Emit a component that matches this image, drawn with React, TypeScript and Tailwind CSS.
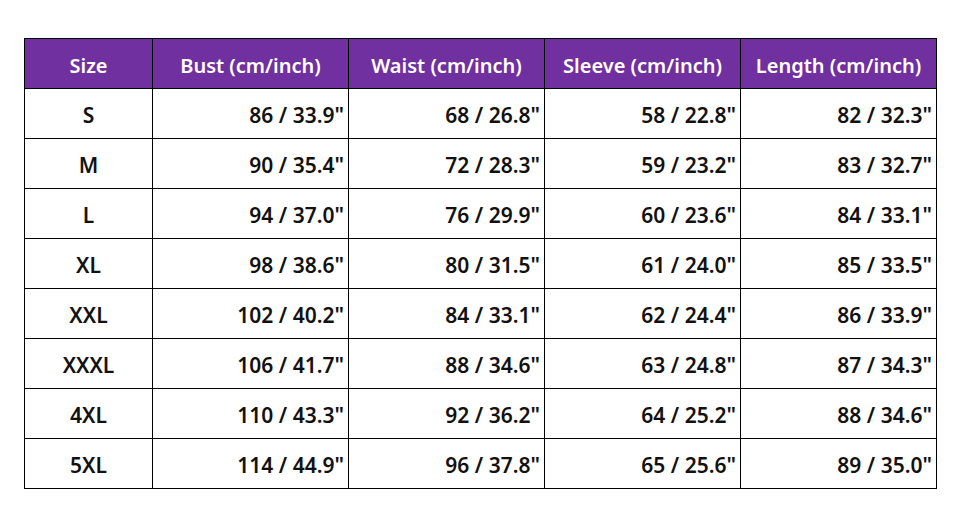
const rows = [
  ['S', '86 / 33.9"', '68 / 26.8"', '58 / 22.8"', '82 / 32.3"'],
  ['M', '90 / 35.4"', '72 / 28.3"', '59 / 23.2"', '83 / 32.7"'],
  ['L', '94 / 37.0"', '76 / 29.9"', '60 / 23.6"', '84 / 33.1"'],
  ['XL', '98 / 38.6"', '80 / 31.5"', '61 / 24.0"', '85 / 33.5"'],
  ['XXL', '102 / 40.2"', '84 / 33.1"', '62 / 24.4"', '86 / 33.9"'],
  ['XXXL', '106 / 41.7"', '88 / 34.6"', '63 / 24.8"', '87 / 34.3"'],
  ['4XL', '110 / 43.3"', '92 / 36.2"', '64 / 25.2"', '88 / 34.6"'],
  ['5XL', '114 / 44.9"', '96 / 37.8"', '65 / 25.6"', '89 / 35.0"'],
]

const headers = ['Size', 'Bust (cm/inch)', 'Waist (cm/inch)', 'Sleeve (cm/inch)', 'Length (cm/inch)']
const widths = ['w-[128px]', 'w-[196px]', 'w-[196px]', 'w-[196px]', 'w-[196px]']

export default function App() {
  return (
    <div className="w-[958px] h-[514px] bg-white pt-[38px] pl-[24px]">
      <table className="border-collapse table-fixed w-[913px] font-['Noto_Sans',sans-serif] text-[#111]">
        <thead>
          <tr className="h-[50px] bg-[#7030a0]">
            {headers.map((h, i) => (
              <th
                key={h}
                className={`${widths[i]} border border-black text-white text-[20px] leading-none font-semibold text-center pt-[4px] pb-0 px-0`}
              >
                {h}
              </th>
            ))}
          </tr>
        </thead>
        <tbody>
          {rows.map((r) => (
            <tr key={r[0]} className="h-[50px]">
              {r.map((c, i) => (
                <td
                  key={i}
                  className={
                    i === 0
                      ? 'border border-black text-[21px] leading-none font-semibold text-center pt-[4px] pb-0 px-0'
                      : 'border border-black text-[21px] leading-none font-semibold text-right pr-[4px] pl-0 pt-[4px] pb-0'
                  }
                >
                  {c}
                </td>
              ))}
            </tr>
          ))}
        </tbody>
      </table>
    </div>
  )
}
